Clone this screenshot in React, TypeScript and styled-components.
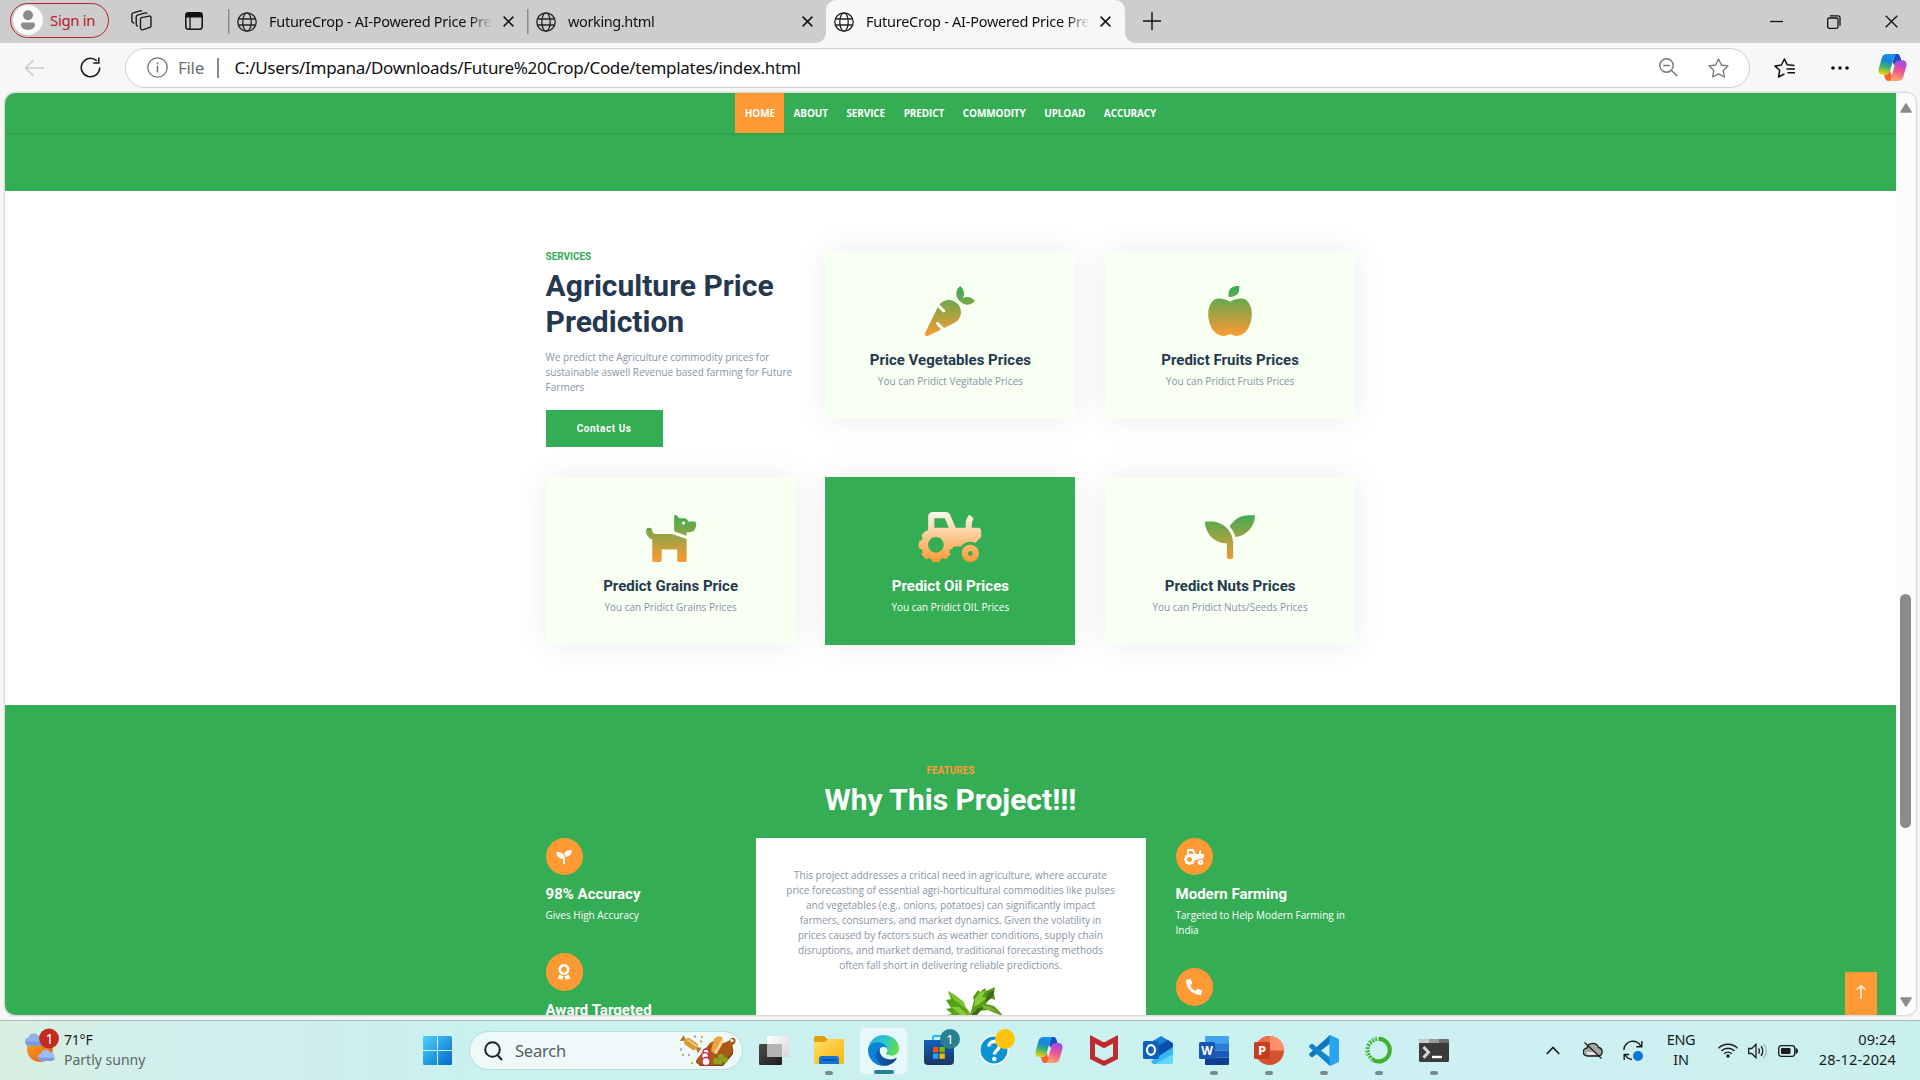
import React from 'react';
import styled, { createGlobalStyle, css } from 'styled-components';
import { FaCarrot, FaAppleAlt, FaDog, FaTractor, FaSeedling, FaAward, FaPhoneAlt } from 'react-icons/fa';
import { BsArrowUp } from 'react-icons/bs';

const GREEN = '#34ad54';
const ORANGE = '#ff9933';
const UI = '"Noto Sans", "Open Sans", sans-serif';
const BODY = '"Open Sans", "Noto Sans", sans-serif';
const HEAD = 'Roboto, "Liberation Sans", sans-serif';

const Global = createGlobalStyle`
  * { box-sizing: border-box; }
  html, body { margin: 0; padding: 0; overflow: hidden; }
  svg { display: block; flex: none; }
  h1, h2, p { margin: 0; }
`;

const Screen = styled.div`
  width: 1920px;
  height: 1080px;
  display: flex;
  flex-direction: column;
  overflow: hidden;
  background: #f7f7f7;
  font-family: ${UI};
`;

/* ---------- tab strip ---------- */

const TabStrip = styled.div`
  height: 43px;
  flex: none;
  display: flex;
  background: #cdcdcd;
`;

const StripTools = styled.div`
  width: 228px;
  padding: 3px 0 5px 10px;
  display: flex;
  align-items: center;
`;

const SignIn = styled.div`
  width: 99px;
  height: 35px;
  border: 1.5px solid #b3262c;
  border-radius: 18px;
  display: flex;
  align-items: center;
  gap: 7px;
  padding: 0 0 1px 2px;
  color: #b3202a;
  font-size: 15px;
  letter-spacing: -0.35px;
  white-space: nowrap;
`;

const StripIcon = styled.div<{ $gap: number }>`
  margin-left: ${(p) => p.$gap}px;
`;

const Tab = styled.div<{ $active?: boolean; $width: number }>`
  position: relative;
  width: ${(p) => p.$width}px;
  height: 43px;
  padding: 0 13px 0 ${(p) => (p.$active ? 8 : 9)}px;
  display: flex;
  align-items: center;
  font-size: 14.5px;
  color: #111;
  ${(p) =>
    p.$active
      ? css`
          background: #f7f7f7;
          border-radius: 10px 10px 0 0;
          &::before, &::after {
            content: '';
            position: absolute;
            bottom: 0;
            width: 10px;
            height: 10px;
          }
          &::before { left: -10px; background: radial-gradient(circle at 0 0, transparent 9.5px, #f7f7f7 10px); }
          &::after { right: -10px; background: radial-gradient(circle at 100% 0, transparent 9.5px, #f7f7f7 10px); }
        `
      : css`
          background: linear-gradient(#8c8c8c, #8c8c8c) 0 9px / 1.5px 25px no-repeat;
        `}
`;

const TabTitle = styled.div<{ $spacing: number }>`
  width: 224px;
  margin-left: 12px;
  margin-right: 10px;
  padding-bottom: 2px;
  white-space: nowrap;
  letter-spacing: ${(p) => p.$spacing}px;
  mask-image: linear-gradient(90deg, #000 200px, transparent 224px);
`;

const NewTab = styled.div`
  margin-left: 18px;
  padding-bottom: 2px;
  display: flex;
  align-items: center;
`;

const WindowButtons = styled.div`
  margin-left: auto;
  padding-right: 22px;
  display: flex;
  align-items: center;
  gap: 44px;
`;

/* ---------- toolbar ---------- */

const Toolbar = styled.div`
  height: 50px;
  flex: none;
  display: flex;
  align-items: center;
  padding: 0 13px 1px 24px;
`;

const AddressBar = styled.div`
  width: 1625px;
  height: 40px;
  margin: 1px 24px 0 24px;
  padding: 0 20px 1px 21px;
  border: 1.5px solid #d0d0d0;
  border-radius: 20px;
  background: #fff;
  display: flex;
  align-items: center;
`;

const FileTag = styled.span`
  margin-left: 10px;
  padding-bottom: 1px;
  width: 39px;
  font-size: 17px;
  letter-spacing: -0.3px;
  color: #6e6e6e;
`;

const AddressDivider = styled.span`
  width: 1.5px;
  height: 20px;
  background: #8a8a8a;
`;

const Url = styled.span`
  margin-left: 16px;
  padding-bottom: 1px;
  flex: 1;
  font-size: 17px;
  letter-spacing: -0.3px;
  color: #111;
  white-space: nowrap;
`;

const AddressIcons = styled.div`
  display: flex;
  gap: 30px;
`;

const ToolIcons = styled.div`
  display: flex;
  align-items: center;
`;

/* ---------- page ---------- */

const Viewport = styled.div`
  width: 1911px;
  height: 922px;
  margin-left: 5px;
  flex: none;
  display: flex;
  border-radius: 10px;
  overflow: hidden;
  box-shadow: 0 0 2px 1px rgba(0, 0, 0, 0.16);
  background: #fcfcfc;
`;

const Page = styled.div`
  position: relative;
  width: 1891px;
  height: 922px;
  overflow: hidden;
  background: #fff;
`;

const ScrollRail = styled.div`
  width: 20px;
  display: flex;
  flex-direction: column;
  align-items: center;
  padding: 10px 1px 8px 0;
  background: #fcfcfc;
`;

const ScrollThumb = styled.div`
  width: 11px;
  height: 234px;
  margin: 481px 0 auto;
  border-radius: 6px;
  background: #8b8b8b;
`;

const Nav = styled.nav`
  position: relative;
  height: 40px;
  display: flex;
  justify-content: center;
  background: ${GREEN};
  box-shadow: 0 1px 3px rgba(0, 0, 0, 0.1);
`;

const NavLink = styled.a<{ $active?: boolean }>`
  padding: 0 9.3px;
  line-height: 41px;
  height: 40px;
  font-family: ${BODY};
  font-size: 10px;
  font-weight: 700;
  letter-spacing: -0.12px;
  color: #fff;
  background: ${(p) => (p.$active ? ORANGE : 'transparent')};
`;

const HeroTail = styled.div`
  height: 58px;
  background: ${GREEN};
`;

const Services = styled.section`
  height: 514px;
  padding: 60px 0 0 540.6px;
  display: grid;
  grid-template-columns: repeat(3, 250px);
  grid-template-rows: 196px 168px;
  column-gap: 29.75px;
  row-gap: 30px;
  align-items: start;
`;

const Intro = styled.div`
  display: flex;
  flex-direction: column;
  align-items: flex-start;
`;

const Kicker = styled.div<{ $orange?: boolean }>`
  height: 12px;
  margin-bottom: 5px;
  line-height: 12px;
  font-family: ${HEAD};
  font-weight: 700;
  font-size: 10px;
  letter-spacing: -0.05px;
  color: ${(p) => (p.$orange ? ORANGE : GREEN)};
`;

const Heading = styled.h1<{ $light?: boolean }>`
  font-family: ${HEAD};
  font-size: 30px;
  line-height: 36px;
  font-weight: 700;
  color: ${(p) => (p.$light ? '#fff' : '#24394f')};
`;

const Copy = styled.p<{ $tone?: 'white' }>`
  font-family: ${BODY};
  font-size: 10px;
  line-height: 15px;
  color: ${(p) => (p.$tone === 'white' ? '#fff' : '#8795a5')};
`;

const IntroCopy = styled(Copy)`
  margin-top: 10px;
  margin-bottom: 15px;
`;

const ContactButton = styled.a`
  width: 117px;
  height: 37px;
  line-height: 38px;
  text-align: center;
  background: ${GREEN};
  color: #fff;
  font-family: ${HEAD};
  font-size: 10px;
  font-weight: 700;
  letter-spacing: 0.55px;
`;

const Card = styled.article<{ $active?: boolean }>`
  height: 168px;
  padding-top: 35px;
  display: flex;
  flex-direction: column;
  align-items: center;
  background: ${(p) => (p.$active ? GREEN : '#f8fff3')};
  box-shadow: 0 0 30px rgba(0, 0, 0, 0.08);
  > svg { height: 50px; width: 64px; }
  > svg path { fill: url(${(p) => (p.$active ? '#glow' : '#field')}); }
`;

const CardTitle = styled.h2<{ $light?: boolean }>`
  margin: 15px 0 5px;
  font-family: ${HEAD};
  font-size: 15px;
  line-height: 18px;
  font-weight: 700;
  letter-spacing: 0.02px;
  color: ${(p) => (p.$light ? '#fff' : '#24394f')};
`;

const Features = styled.section`
  height: 400px;
  padding-top: 60px;
  background: ${GREEN};
  display: flex;
  flex-direction: column;
  align-items: center;
`;

const FeatureColumns = styled.div`
  margin-top: 20px;
  width: 810px;
  display: grid;
  grid-template-columns: 180px 390px 180px;
  column-gap: 30px;
`;

const FeatureList = styled.div`
  display: flex;
  flex-direction: column;
  gap: 30px;
`;

const FeatureTitle = styled(CardTitle)`
  margin-top: 10px;
`;

const Disc = styled.div`
  width: 37.3px;
  height: 37.3px;
  border-radius: 50%;
  display: flex;
  align-items: center;
  justify-content: center;
  background: ${ORANGE};
  color: #fff;
  > svg { width: 20px; height: 16px; }
`;

const Story = styled.div`
  padding: 30px 30px 0;
  height: 300px;
  background: #fff;
  text-align: center;
  display: flex;
  flex-direction: column;
  align-items: center;
  gap: 10px;
`;

const CelerySlot = styled.div`
  margin: 1px 0 0 49px;
`;

const BackToTop = styled.a`
  position: absolute;
  right: 19px;
  bottom: 0;
  width: 32px;
  height: 43px;
  padding-top: 12px;
  display: flex;
  justify-content: center;
  background: ${ORANGE};
  color: #fff;
  font-size: 16px;
  > svg { stroke: #fff; stroke-width: 0.4px; }
`;

/* ---------- taskbar ---------- */

const Taskbar = styled.div`
  height: 60px;
  margin-top: auto;
  flex: none;
  display: flex;
  align-items: center;
  border-top: 1px solid #a9bcbc;
  background: linear-gradient(90deg, #d9efe0 0, #d2efeb 120px, #cfeeee 300px, #c9f1ef 480px, #cbf1f0 1200px, #cdf0f2 1500px, #caf0ee 1920px);
`;

const Weather = styled.div`
  width: 399px;
  padding-left: 25px;
  display: flex;
  align-items: center;
  > svg { margin-bottom: 10px; }
`;

const WeatherText = styled.div`
  margin: 0 0 1px 4px;
  font-size: 14px;
  line-height: 20px;
  letter-spacing: -0.2px;
  color: #1c1c1c;
  span { display: block; color: #5b6666; letter-spacing: 0; }
`;

const StartButton = styled.div`
  width: 70px;
  padding-left: 24px;
`;

const SearchBox = styled.div`
  width: 274px;
  height: 39px;
  border-radius: 20px;
  border: 1px solid #b9dcdc;
  background: #eefafa;
  display: flex;
  align-items: center;
  padding: 0 6px 0 14px;
  font-size: 16.5px;
  color: #555e5e;
  letter-spacing: -0.2px;
  > span { flex: 1; margin-left: 12px; padding-bottom: 1px; }
`;

const Apps = styled.div`
  margin-left: 3px;
  display: flex;
`;

const AppSlot = styled.div<{ $open?: boolean; $active?: boolean }>`
  position: relative;
  width: 55px;
  height: 48px;
  padding-bottom: 1px;
  display: flex;
  align-items: center;
  justify-content: center;
  ${(p) =>
    p.$active &&
    css`
      width: 49px;
      margin: 0 3px;
      border-radius: 6px;
      background: #e6f8f7;
      border: 1px solid #d6eeed;
    `}
  &::after {
    content: '';
    display: ${(p) => (p.$open ? 'block' : 'none')};
    position: absolute;
    bottom: 0;
    left: 50%;
    transform: translateX(-50%);
    width: ${(p) => (p.$active ? 20 : 8)}px;
    height: 4px;
    border-radius: 2px;
    background: ${(p) => (p.$active ? '#258393' : '#778c8c')};
  }
`;

const Badge = styled.div<{ $color: string }>`
  position: absolute;
  left: 29px;
  top: 2px;
  width: 20px;
  height: 20px;
  border-radius: 50%;
  background: ${(p) => p.$color};
  color: #fff;
  font-size: 13px;
  line-height: 20px;
  text-align: center;
`;

const Tray = styled.div`
  margin-left: auto;
  padding-right: 24px;
  display: flex;
  align-items: center;
  color: #1b1b1b;
`;

const TrayText = styled.div<{ $width: number; $align: string; $spacing?: number }>`
  width: ${(p) => p.$width}px;
  padding-bottom: 3px;
  text-align: ${(p) => p.$align};
  font-size: 14.5px;
  line-height: 20px;
  letter-spacing: ${(p) => p.$spacing ?? -0.3}px;
  white-space: nowrap;
`;

const Gap = styled.span<{ $w: number }>`
  width: ${(p) => p.$w}px;
`;

/* ---------- drawings ---------- */

const Globe = () => (
  <svg width="20" height="20" viewBox="0 0 20 20" fill="none" stroke="#222" strokeWidth="1.3">
    <circle cx="10" cy="10" r="9.2" />
    <ellipse cx="10" cy="10" rx="4.2" ry="9.2" />
    <path d="M1.6 7h16.8M1.6 13h16.8" />
  </svg>
);

const Cross = ({ size = 11, w = 1.5 }: { size?: number; w?: number }) => (
  <svg width={size} height={size} viewBox="0 0 11 11" stroke="#111" strokeWidth={w}>
    <path d="M.6 .6l9.8 9.8M10.4 .6L.6 10.4" />
  </svg>
);

const Avatar = () => (
  <svg width="30" height="30" viewBox="0 0 30 30">
    <circle cx="15" cy="15" r="15" fill="#fafafa" />
    <circle cx="15" cy="10.3" r="5" fill="#8b8b8b" />
    <path d="M8 19.2a1.7 1.7 0 0 1 1.700-1.700h10.600a1.700 1.700 0 0 1 1.700 1.700c0 3.800-3 5.600-7 5.600s-7-1.800-7-5.600z" fill="#8b8b8b" />
  </svg>
);

const Workspaces = () => (
  <svg width="21" height="21" viewBox="0 0 21 21" fill="none" stroke="#1c1c1c" strokeWidth="1.4" strokeLinejoin="round">
    <path d="M10.500 7.600l7.600-1.500a1.600 1.600 0 0 1 1.900 1.500v8.300a1.600 1.600 0 0 1-1.200 1.500l-7.300 2.400a1.600 1.600 0 0 1-2-1.500V9.200a1.600 1.600 0 0 1 1-1.600z" />
    <path d="M7 16.500l-1-.7a2 2 0 0 1-.8-1.600V6.900a2 2 0 0 1 1.300-1.800l7.700-2.200a2 2 0 0 1 2 .8" />
    <path d="M3.200 13.400l-1.500-1A2 2 0 0 1 .9 10.800V4.700a2 2 0 0 1 1.300-1.900L9 .9a2 2 0 0 1 1.900.4" />
  </svg>
);

const TabActions = () => (
  <svg width="18" height="18" viewBox="0 0 18 18">
    <rect x=".8" y=".8" width="16.400" height="16.400" rx="2.600" fill="none" stroke="#111" strokeWidth="1.500" />
    <path d="M1 5.500V3a2 2 0 0 1 2-2h12a2 2 0 0 1 2 2v2.500z" fill="#111" />
    <path d="M5 5v12" stroke="#111" strokeWidth="1.300" />
  </svg>
);

const Copilot = ({ size = 28 }: { size?: number }) => (
  <svg width={size} height={size} viewBox="0 0 28 28">
    <path d="M18.500 4.500C18 2.600 17.300 1 15 1h3c2.300 0 3 1.500 3.600 3.500l1.300 4.200h-4z" fill="#1748b5" />
    <path d="M8.500 1H19c-2 0-2.900 1.300-3.500 3.200l-4.100 13.400c-.7 2.200-1.600 3.400-4 3.400H4.600C1.200 21-.2 18.500.7 15L3.500 5.200C4.300 2.400 6 1 8.500 1z" fill="url(#copA)" />
    <path d="M19.500 27H9c2 0 2.900-1.300 3.500-3.200l4.100-13.400c.7-2.200 1.600-3.400 4-3.400h2.800c3.400 0 4.800 2.500 3.900 6l-2.800 9.800c-.8 2.800-2.500 4.200-5 4.200z" fill="url(#copB)" />
    <path d="M7.400 21c2.400 0 3.300-1.200 4-3.400l.3-.8 1.700 5.600C12.500 26 11.500 27 9.800 27 7.500 27 7 25 6.400 23.200L5.800 21z" fill="#f4632f" />
    <path d="M20.600 7c-2.400 0-3.300 1.200-4 3.400l-.5 1.600-2-3 1.500-5C16.300 2 17 1 18.500 1c1.800.2 2.500 1.800 3.100 3.700l.8 2.300z" fill="#1a4cc4" />
  </svg>
);

const Partly = () => (
  <svg width="35" height="36" viewBox="0 0 35 36">
    <circle cx="15" cy="21" r="13" fill="url(#sun)" />
    <path d="M4 17.500a4 4 0 0 1-.5-8 5.300 5.300 0 0 1 10-1 4.600 4.600 0 0 1 4 9z" fill="#8fb1ee" />
    <path d="M4 17.500a4 4 0 0 1-3.500-4h17l0 4z" fill="#7399e2" />
    <path d="M16.500 33a3.800 3.800 0 0 1-.5-7.500 5 5 0 0 1 9.300-1.200A4.500 4.500 0 0 1 26.500 33z" fill="#9dbcf3" />
    <path d="M16.500 33a3.800 3.800 0 0 1-3.400-3.300H30A4.200 4.200 0 0 1 26.500 33z" fill="#7a9fe6" />
    <circle cx="24" cy="10.500" r="10" fill="#c42b1f" />
    <text x="24.500" y="15.500" fontSize="13.500" fill="#fff" textAnchor="middle" fontFamily="Noto Sans">1</text>
  </svg>
);

const Windows = () => (
  <svg width="29" height="29" viewBox="0 0 29 29" fill="url(#win)">
    <path d="M1.500 0H14v14H0V1.500A1.500 1.500 0 0 1 1.500 0zM15 0h12.500A1.500 1.500 0 0 1 29 1.500V14H15zM0 15h14v14H1.500A1.500 1.500 0 0 1 0 27.500zM15 15h14v12.500a1.500 1.500 0 0 1-1.500 1.500H15z" />
  </svg>
);

const Board = () => (
  <svg width="56" height="32" viewBox="0 0 56 32">
    <path d="M30 8l9-5 5 5 6-3c1-3 5-3 5.500 0s-1 4-3 5l1 6-11 14H20c-4-1-5-3-3-6z" fill="#a65a14" />
    <path d="M18 28l3 2h21l11-14v3L43 31H20z" fill="#7a3e0c" />
    <circle cx="52" cy="5.500" r="1.600" fill="#eefafa" />
    <path d="M31 16l3-12c2-3 8-4 9 0l-8 15z" fill="#e9a544" />
    <path d="M34 18l8-14c1.500 0 2 1.500 1.500 3l-7 12z" fill="#f8d792" />
    <g transform="rotate(35 11 9)">
      <rect x="4" y="5" width="14" height="8" rx="3" fill="#d99a3a" />
      <path d="M0 6l4 2v2l-4 3zM22 6l-4 2v2l4 3z" fill="#b97820" />
      <path d="M5 7.500h12" stroke="#f6cf80" strokeWidth="1.500" />
    </g>
    <g fill="#fff" stroke="#d42a55" strokeWidth="1.300">
      <circle cx="26" cy="17" r="3" />
      <circle cx="25" cy="21" r="3.400" />
      <circle cx="26" cy="26.500" r="4" />
    </g>
    <g fill="#8ea31d">
      <circle cx="36" cy="26" r="3" />
      <circle cx="41" cy="22" r="3" />
      <circle cx="45" cy="25" r="2.800" />
      <circle cx="40" cy="27" r="2.600" />
    </g>
    <g fill="#d8ae4c">
      <circle cx="22" cy="2" r="1.200" />
      <circle cx="21" cy="6.500" r="1.200" />
      <circle cx="3" cy="20" r="1.200" />
      <circle cx="12" cy="28" r="1.200" />
    </g>
    <g fill="#b49bd0">
      <circle cx="15" cy="1.500" r="1.200" />
      <circle cx="1" cy="14.500" r="1.200" />
      <circle cx="9" cy="20" r="1.200" />
    </g>
  </svg>
);

const TaskView = () => (
  <svg width="30" height="29" viewBox="0 0 30 29">
    <rect y="8" width="23" height="21" rx="1.200" fill="url(#dark)" />
    <rect x="8" y="0" width="22" height="21" rx="1.200" fill="url(#pane)" />
    <path d="M8 8h15v13H8z" fill="#b4b4b4" />
  </svg>
);

const Explorer = () => (
  <svg width="30" height="28" viewBox="0 0 30 28">
    <path d="M0 2a2 2 0 0 1 2-2h8l3 3h15a2 2 0 0 1 2 2v6H0z" fill="#e09f0b" />
    <path d="M0 6h11l3-3h14.500A1.500 1.500 0 0 1 30 4.500V28H0z" fill="url(#folder)" />
    <path d="M5 28v-5a3 3 0 0 1 3-3h14a3 3 0 0 1 3 3v5z" fill="#1575cf" />
    <path d="M8 24h14" stroke="#0a4c9c" strokeWidth="1.600" />
  </svg>
);

const Edge = () => (
  <svg width="31" height="31" viewBox="0 0 256 256">
    <path d="M231 190.500c-3.400 1.800-7 3.300-10.600 4.700a101.900 101.900 0 0 1-35.900 6.400c-47.300 0-88.500-32.500-88.500-74.300a31.500 31.500 0 0 1 16.400-27.300c-42.800 1.800-53.800 46.400-53.800 72.500 0 73.900 68.100 81.400 82.800 81.400 7.900 0 19.800-2.300 27-4.600l1.300-.4a128.300 128.300 0 0 0 66.600-52.800 4 4 0 0 0-5.300-5.600z" fill="url(#edgeDeep)" />
    <path d="M105.700 241.400A79.200 79.200 0 0 1 83 220.100a80.700 80.700 0 0 1 29.500-120c3.200-1.500 8.500-4.100 15.600-4a32.400 32.400 0 0 1 25.700 13c4.100 5.400 6.200 11.900 6.300 18.700 0-.2 24.500-79.600-80-79.600-43.900 0-80 41.700-80 78.200a130.200 130.200 0 0 0 12.100 56 128 128 0 0 0 156.400 67 75.500 75.500 0 0 1-62.800-8z" fill="#0b84d8" />
    <path d="M152.300 148.900c-.9 1-3.400 2.500-3.400 5.600 0 2.600 1.700 5.200 4.800 7.300 14.300 10 41.400 8.600 41.500 8.600a59.600 59.600 0 0 0 30.300-8.300 61.400 61.400 0 0 0 30.400-52.900c.3-22.400-8-37.300-11.300-43.900C223.500 23.900 177.700 0 128 0A128 128 0 0 0 0 126.200c.5-36.500 36.800-66 80-66 3.500 0 23.500.3 42 10.100 16.300 8.600 24.900 19 30.800 29.200 6.200 10.700 7.300 24.100 7.300 29.500s-2.700 13.300-7.800 19.900z" fill="url(#edgeTop)" />
  </svg>
);

const Store = () => (
  <svg width="30" height="30" viewBox="0 0 30 30">
    <path d="M9 6V2.500A1.500 1.500 0 0 1 10.500 1h9A1.500 1.500 0 0 1 21 2.500V6" fill="none" stroke="#2bb9f2" strokeWidth="2" />
    <path d="M0 5h30v21a4 4 0 0 1-4 4H4a4 4 0 0 1-4-4z" fill="url(#store)" />
    <path d="M9 12h5.300v5.300H9z" fill="#f25022" />
    <path d="M15.500 12h5.300v5.300h-5.300z" fill="#7fba00" />
    <path d="M9 18.500h5.300v5.300H9z" fill="#20a7f0" />
    <path d="M15.500 18.500h5.300v5.300h-5.300z" fill="#ffb900" />
  </svg>
);

const Help = () => (
  <svg width="30" height="30" viewBox="0 0 30 30">
    <circle cx="15" cy="15" r="14.200" fill="#0c93d4" stroke="#fff" strokeWidth="1.500" />
    <path d="M10 11.500c0-3 2-5 5.200-5s5.200 2 5.200 4.600c0 4-5 4.200-5 8.400" fill="none" stroke="#fff" strokeWidth="3.400" />
    <circle cx="15.300" cy="24" r="2.200" fill="#fff" />
  </svg>
);

const McAfee = () => (
  <svg width="28" height="31" viewBox="0 0 28 31">
    <path d="M0 0l14 7.500L28 0v24l-14 7-14-7zM5 8.500v12.800l9 4.500 9-4.500V8.500l-9 4.800z" fill="#c02a2f" fillRule="evenodd" />
  </svg>
);

const Outlook = () => (
  <svg width="31" height="28" viewBox="0 0 31 28">
    <path d="M5 8L18 0l12 7v9H5z" fill="#1583d8" />
    <path d="M5 16L25 4l5 4v5L12 25z" fill="#0a4ea8" />
    <path d="M8 25l22-14v14a3 3 0 0 1-3 3H10z" fill="#35b8f1" />
    <path d="M12 28l18-10v7a3 3 0 0 1-3 3z" fill="#63d6fb" />
    <rect y="5" width="16" height="18" rx="1.500" fill="#0f62bd" />
    <ellipse cx="8" cy="14" rx="4" ry="4.800" fill="none" stroke="#fff" strokeWidth="2.200" />
  </svg>
);

const Word = () => (
  <svg width="30" height="29" viewBox="0 0 30 29">
    <path d="M7 0h22a1 1 0 0 1 1 1v6.500H6V1a1 1 0 0 1 1-1z" fill="#41a5ee" />
    <path d="M6 7.300h24v7.200H6z" fill="#2b7cd3" />
    <path d="M6 14.500h24v7.200H6z" fill="#185abd" />
    <path d="M6 21.700h24V28a1 1 0 0 1-1 1H7a1 1 0 0 1-1-1z" fill="#103f91" />
    <rect y="6" width="16" height="17" rx="1.500" fill="#1a57b5" />
    <text x="8" y="19" fontSize="12" fontWeight="700" fill="#fff" textAnchor="middle" fontFamily="Open Sans">W</text>
  </svg>
);

const PowerPoint = () => (
  <svg width="30" height="29" viewBox="0 0 30 29">
    <circle cx="15.500" cy="14.500" r="14.500" fill="#d35230" />
    <path d="M15.500 0A14.500 14.500 0 0 0 1 14.500h14.500z" fill="#ed6c47" />
    <path d="M15.500 0A14.500 14.500 0 0 1 30 14.500H15.500z" fill="#ff8f6b" />
    <rect y="6" width="16" height="17" rx="1.500" fill="#c43e1c" />
    <text x="8" y="19" fontSize="13" fontWeight="700" fill="#fff" textAnchor="middle" fontFamily="Open Sans">P</text>
  </svg>
);

const Code = () => (
  <svg width="31" height="31" viewBox="0 0 31 31">
    <path d="M22 0L1.500 18.500c-.6.600-.6 1.400 0 2l1.700 1.500c.5.400 1.100.4 1.600 0L22 8.500z" fill="#0f75bd" />
    <path d="M22 31L1.500 12.500c-.6-.6-.6-1.400 0-2L3.200 9c.5-.4 1.100-.4 1.600 0L22 22.500z" fill="#1186cf" />
    <path d="M22 0l7.800 3.500c.7.300 1.200 1 1.200 1.800v20.400c0 .8-.5 1.500-1.200 1.800L22 31c-.5-.3-.5-.7-.5-1.200V1.200c0-.5 0-.9.500-1.200z" fill="#28a3f0" />
  </svg>
);

const Anaconda = () => (
  <svg width="27" height="28" viewBox="0 0 27 28" fill="none" stroke="#3eb12f">
    <path d="M13.500 2.800A11.300 11.300 0 1 1 8 24" strokeWidth="4.200" />
    <path d="M12 2.800A11.300 11.300 0 0 0 9 24.200" strokeWidth="4" strokeDasharray="2.200 1" />
    <path d="M11.500 2A12.500 12.500 0 0 0 8 25" stroke="#cbf1f0" strokeWidth="1" strokeDasharray="2 2" />
  </svg>
);

const Terminal = () => (
  <svg width="30" height="23" viewBox="0 0 30 23">
    <rect width="30" height="23" rx="1.500" fill="#3b3b3b" />
    <path d="M1.500 0H10v4H0V1.500A1.500 1.500 0 0 1 1.500 0z" fill="#c9c9c9" />
    <path d="M10 0h10v4H10z" fill="#9b9b9b" />
    <path d="M20 0h8.500A1.500 1.500 0 0 1 30 1.500V4H20z" fill="#6d6d6d" />
    <path d="M4.500 8l5 5.300-5 5.300" fill="none" stroke="#d5d5d5" strokeWidth="3" />
    <path d="M13 18h10" stroke="#fff" strokeWidth="2.400" />
  </svg>
);

const Celery = () => (
  <svg width="60" height="60" viewBox="0 0 60 60">
    <path d="M20 60L21 30 8 14l12 8 6 8 5-10 5 2-6 12-3 26z" fill="#7fae2c" />
    <path d="M1 16l5-1-3-8 8 5 6 5 5 9 1 6-5 3-12-1-4-3 5-1-6-5 5-1z" fill="#55a318" />
    <path d="M3 7l7 4 5 4 4 3 2 7-6-5-6-4z" fill="#7cc52c" />
    <path d="M27 24l2-8-1-3 5-7 2 2 5-4 1 3 9-4-1 6 1 7-5-2-4 6 8 2 6 6 3 4-8-3-7-3-8 1-5 6-5-2z" fill="#5c9a1c" />
    <path d="M30 15l4-6 7-3-4 7 5 1-8 6-5 3z" fill="#86cb38" />
    <path d="M43 9l6-3-1 7-4 3-4 2z" fill="#43691a" />
    <path d="M6 23l8 0 8 7-4 4-8-1 5-3z" fill="#85c934" />
    <path d="M25 33l8-9 6-1-7 8-2 9h-6z" fill="#3e6b12" />
    <path d="M38 21l7 2 8 5-8-2-7-2z" fill="#79b83a" />
  </svg>
);

const HiddenSvg = styled.svg`
  position: absolute;
`;

const Defs = () => (
  <HiddenSvg width="0" height="0">
    <defs>
      <linearGradient id="field" gradientUnits="userSpaceOnUse" x1="0" y1="0" x2="0" y2="512"><stop stopColor={GREEN} /><stop offset="1" stopColor={ORANGE} /></linearGradient>
      <linearGradient id="glow" gradientUnits="userSpaceOnUse" x1="0" y1="0" x2="0" y2="512"><stop stopColor="#f8f8ee" /><stop offset="1" stopColor={ORANGE} /></linearGradient>
      <linearGradient id="copA" x1=".6" y1="0" x2=".35" y2="1"><stop stopColor="#1b8ff0" /><stop offset=".35" stopColor="#1685d8" /><stop offset=".65" stopColor="#45b36b" /><stop offset="1" stopColor="#ecd20c" /></linearGradient>
      <linearGradient id="copB" x1=".7" y1="0" x2=".4" y2="1"><stop stopColor="#9a4bea" /><stop offset=".45" stopColor="#ea4f9c" /><stop offset="1" stopColor="#ffa860" /></linearGradient>
      <linearGradient id="sun" x1="0" y1="0" x2=".6" y2="1"><stop stopColor="#f3a62a" /><stop offset="1" stopColor="#ef6c12" /></linearGradient>
      <linearGradient id="win" x1="0" y1="0" x2="1" y2="1"><stop stopColor="#4fd1fc" /><stop offset="1" stopColor="#0369c9" /></linearGradient>
      <linearGradient id="dark" x1="0" y1="0" x2="1" y2="1"><stop stopColor="#4d4c48" /><stop offset="1" stopColor="#1d1d1d" /></linearGradient>
      <linearGradient id="pane" x1="0" y1="0" x2="1" y2="1"><stop stopColor="#fff" /><stop offset="1" stopColor="#d6d6d6" /></linearGradient>
      <linearGradient id="folder" x1="0" y1="0" x2="1" y2="1"><stop stopColor="#ffdd6b" /><stop offset="1" stopColor="#f5b70b" /></linearGradient>
      <linearGradient id="edgeDeep" x1="0" y1="0" x2="1" y2="0"><stop stopColor="#1062b8" /><stop offset="1" stopColor="#123f7c" /></linearGradient>
      <linearGradient id="edgeTop" x1="0" y1=".2" x2="1" y2=".5"><stop stopColor="#35a9e6" /><stop offset=".5" stopColor="#2fc4cf" /><stop offset="1" stopColor="#5fdc4e" /></linearGradient>
      <linearGradient id="store" x1="0" y1="0" x2="0" y2="1"><stop stopColor="#0c63b8" /><stop offset="1" stopColor="#1d3463" /></linearGradient>
    </defs>
  </HiddenSvg>
);

/* ---------- data ---------- */

const NAV = ['HOME', 'ABOUT', 'SERVICE', 'PREDICT', 'COMMODITY', 'UPLOAD', 'ACCURACY'];

const CARDS = [
  { icon: <FaCarrot />, title: 'Price Vegetables Prices', text: 'You can Pridict Vegitable Prices' },
  { icon: <FaAppleAlt />, title: 'Predict Fruits Prices', text: 'You can Pridict Fruits Prices' },
  { icon: <FaDog />, title: 'Predict Grains Price', text: 'You can Pridict Grains Prices' },
  { icon: <FaTractor />, title: 'Predict Oil Prices', text: 'You can Pridict OIL Prices', active: true },
  { icon: <FaSeedling />, title: 'Predict Nuts Prices', text: 'You can Pridict Nuts/Seeds Prices' },
];

const APPS: { icon: React.ReactNode; open?: boolean; active?: boolean; badge?: React.ReactNode }[] = [
  { icon: <TaskView /> },
  { icon: <Explorer />, open: true },
  { icon: <Edge />, open: true, active: true },
  { icon: <Store />, badge: <Badge $color="#27808f">1</Badge> },
  { icon: <Help />, badge: <Badge $color="#ffc20e" /> },
  { icon: <Copilot /> },
  { icon: <McAfee /> },
  { icon: <Outlook /> },
  { icon: <Word />, open: true },
  { icon: <PowerPoint />, open: true },
  { icon: <Code />, open: true },
  { icon: <Anaconda />, open: true },
  { icon: <Terminal />, open: true },
];

const Feature = ({ icon, title, text }: { icon: React.ReactNode; title?: string; text?: string }) => (
  <div>
    <Disc>{icon}</Disc>
    {title && <FeatureTitle $light>{title}</FeatureTitle>}
    {text && <Copy $tone="white">{text}</Copy>}
  </div>
);

export default function App() {
  return (
    <Screen>
      <Global />
      <Defs />
      <TabStrip>
        <StripTools>
          <SignIn><Avatar />Sign in</SignIn>
          <StripIcon $gap={22}><Workspaces /></StripIcon>
          <StripIcon $gap={33}><TabActions /></StripIcon>
        </StripTools>
        <Tab $width={299}><Globe /><TabTitle $spacing={-0.28}>FutureCrop - AI-Powered Price Pre</TabTitle><Cross /></Tab>
        <Tab $width={299}><Globe /><TabTitle $spacing={-0.38}>working.html</TabTitle><Cross /></Tab>
        <Tab $width={299} $active><Globe /><TabTitle $spacing={-0.25}>FutureCrop - AI-Powered Price Pre</TabTitle><Cross /></Tab>
        <NewTab>
          <svg width="18" height="18" viewBox="0 0 18 18" stroke="#111" strokeWidth="1.400"><path d="M9 0v18M0 9h18" /></svg>
        </NewTab>
        <WindowButtons>
          <svg width="13" height="13" stroke="#111" strokeWidth="1.300"><path d="M0 6.500h13" /></svg>
          <svg width="14" height="14" fill="none" stroke="#111" strokeWidth="1.300">
            <rect x=".7" y="3" width="10.300" height="10.300" rx="1.500" />
            <path d="M3 .8h8a2 2 0 0 1 2 2v8" />
          </svg>
          <Cross size={13} w={1.1} />
        </WindowButtons>
      </TabStrip>

      <Toolbar>
        <svg width="21" height="18" viewBox="0 0 21 18" fill="none" stroke="#c9c9c9" strokeWidth="1.400"><path d="M20 9H1.500M9.500 1L1.500 9l8 8" /></svg>
        <Gap $w={35} />
        <svg width="21" height="21" viewBox="0 0 21 21" fill="none" stroke="#1a1a1a" strokeWidth="1.600">
          <path d="M19.700 10.500a9.200 9.200 0 1 1-2.900-6.700M18.800 .5V6h-5.500" />
        </svg>
        <AddressBar>
          <svg width="21" height="21" viewBox="0 0 21 21" fill="none" stroke="#707070" strokeWidth="1.300">
            <circle cx="10.500" cy="10.500" r="9.700" />
            <path d="M10.500 9v6.500M10.500 5.500v1.800" strokeWidth="1.500" />
          </svg>
          <FileTag>File</FileTag>
          <AddressDivider />
          <Url>C:/Users/Impana/Downloads/Future%20Crop/Code/templates/index.html</Url>
          <AddressIcons>
            <svg width="19" height="19" viewBox="0 0 19 19" fill="none" stroke="#757575" strokeWidth="1.400">
              <circle cx="7.500" cy="7.500" r="6.700" />
              <path d="M4.200 7.500h6.600M12.300 12.300l6 6" />
            </svg>
            <svg width="21" height="20" viewBox="0 0 21 20" fill="none" stroke="#757575" strokeWidth="1.300" strokeLinejoin="round">
              <path d="M10.500 1l2.900 6 6.600.9-4.800 4.600 1.200 6.500-5.900-3.100L4.600 19l1.200-6.500L1 7.900 7.600 7z" />
            </svg>
          </AddressIcons>
        </AddressBar>
        <ToolIcons>
          <svg width="21" height="20" viewBox="0 0 21 20" fill="none" stroke="#111" strokeWidth="1.500" strokeLinejoin="round">
            <path d="M20.500 7.400l-7.300-.7L10.400 1l-3 6L.9 7.900l4.800 4.600L4.500 19l6-3.100M12.500 11H21M13.500 14.700H21" />
          </svg>
          <Gap $w={36} />
          <svg width="18" height="4" fill="#111"><circle cx="2" cy="2" r="1.800" /><circle cx="9" cy="2" r="1.800" /><circle cx="16" cy="2" r="1.800" /></svg>
          <Gap $w={29} />
          <Copilot size={29} />
        </ToolIcons>
      </Toolbar>

      <Viewport>
        <Page>
          <Nav>{NAV.map((n, i) => <NavLink key={n} $active={i === 0}>{n}</NavLink>)}</Nav>
          <HeroTail />
          <Services>
            <Intro>
              <Kicker>SERVICES</Kicker>
              <Heading>Agriculture Price<br />Prediction</Heading>
              <IntroCopy>We predict the Agriculture commodity prices for<br />sustainable aswell Revenue based farming for Future<br />Farmers</IntroCopy>
              <ContactButton>Contact Us</ContactButton>
            </Intro>
            {CARDS.map((c) => (
              <Card key={c.title} $active={c.active}>
                {c.icon}
                <CardTitle $light={c.active}>{c.title}</CardTitle>
                <Copy $tone={c.active ? 'white' : undefined}>{c.text}</Copy>
              </Card>
            ))}
          </Services>
          <Features>
            <Kicker $orange>FEATURES</Kicker>
            <Heading $light>Why This Project!!!</Heading>
            <FeatureColumns>
              <FeatureList>
                <Feature icon={<FaSeedling />} title="98% Accuracy" text="Gives High Accuracy" />
                <Feature icon={<FaAward />} title="Award Targeted" />
              </FeatureList>
              <Story>
                <Copy>
                  This project addresses a critical need in agriculture, where accurate<br />
                  price forecasting of essential agri-horticultural commodities like pulses<br />
                  and vegetables (e.g., onions, potatoes) can significantly impact<br />
                  farmers, consumers, and market dynamics. Given the volatility in<br />
                  prices caused by factors such as weather conditions, supply chain<br />
                  disruptions, and market demand, traditional forecasting methods<br />
                  often fall short in delivering reliable predictions.
                </Copy>
                <CelerySlot><Celery /></CelerySlot>
              </Story>
              <FeatureList>
                <Feature icon={<FaTractor />} title="Modern Farming" text="Targeted to Help Modern Farming in India" />
                <Feature icon={<FaPhoneAlt />} />
              </FeatureList>
            </FeatureColumns>
          </Features>
          <BackToTop><BsArrowUp /></BackToTop>
        </Page>
        <ScrollRail>
          <svg width="12" height="10"><path d="M6 1L11 9H1z" fill="#8b8b8b" stroke="#8b8b8b" strokeWidth="1.500" strokeLinejoin="round" /></svg>
          <ScrollThumb />
          <svg width="12" height="10"><path d="M6 9L11 1H1z" fill="#8b8b8b" stroke="#8b8b8b" strokeWidth="1.500" strokeLinejoin="round" /></svg>
        </ScrollRail>
      </Viewport>

      <Taskbar>
        <Weather>
          <Partly />
          <WeatherText>71°F<span>Partly sunny</span></WeatherText>
        </Weather>
        <StartButton><Windows /></StartButton>
        <SearchBox>
          <svg width="19" height="20" viewBox="0 0 19 20" fill="none" stroke="#222" strokeWidth="2"><circle cx="8.500" cy="8.500" r="7.300" /><path d="M13.500 14l4.500 5" /></svg>
          <span>Search</span>
          <Board />
        </SearchBox>
        <Apps>
          {APPS.map((a, i) => (
            <AppSlot key={i} $open={a.open} $active={a.active}>{a.icon}{a.badge}</AppSlot>
          ))}
        </Apps>
        <Tray>
          <svg width="14" height="9" fill="none" stroke="#1b1b1b" strokeWidth="1.700"><path d="M.8 8L7 1.500 13.200 8" /></svg>
          <Gap $w={23} />
          <svg width="20" height="17" viewBox="0 0 20 17">
            <path d="M4.500 14a4 4 0 0 1-.5-8 6 6 0 0 1 11.500-.5A4.300 4.300 0 0 1 15.500 14z" fill="#a5a5a5" stroke="#1b1b1b" strokeWidth="1.300" />
            <path d="M3 10h8l4 3H5z" fill="#e5e5e5" />
            <path d="M1.500 .5l17 16" stroke="#1b1b1b" strokeWidth="1.300" />
          </svg>
          <Gap $w={20} />
          <svg width="20" height="21" viewBox="0 0 20 21" fill="none" stroke="#1b1b1b" strokeWidth="1.400">
            <path d="M.8 10A9 9 0 0 1 18 6.500M18.800 1v5.700h-5.500M9 19.500A9 9 0 0 1 2 14.500M1.200 20v-5.500h5" />
            <circle cx="15" cy="16" r="5" fill="#0b78d8" stroke="none" />
          </svg>
          <Gap $w={22} />
          <TrayText $width={32} $align="center">ENG<br />IN</TrayText>
          <Gap $w={21} />
          <svg width="20" height="15" viewBox="0 0 20 15" fill="none" stroke="#1b1b1b" strokeWidth="1.400">
            <path d="M.6 5.200a13.300 13.300 0 0 1 18.800 0M3.500 8a9.200 9.200 0 0 1 13 0M6.200 10.700a5.400 5.400 0 0 1 7.600 0" />
            <circle cx="10" cy="13" r="1.700" fill="#1b1b1b" stroke="none" />
          </svg>
          <Gap $w={10} />
          <svg width="20" height="16" viewBox="0 0 20 16" fill="none" stroke="#1b1b1b" strokeWidth="1.300">
            <path d="M.7 5.500h3L8 1.300v13.400L3.700 10.500h-3zM10.500 5.500a4 4 0 0 1 0 5M13 3.300a7 7 0 0 1 0 9.400" />
            <path d="M15.500 1a10 10 0 0 1 0 14" stroke="#9fb5b5" />
          </svg>
          <Gap $w={10} />
          <svg width="20" height="12" viewBox="0 0 20 12">
            <rect x=".7" y=".7" width="16" height="10.600" rx="2.500" fill="none" stroke="#1b1b1b" strokeWidth="1.300" />
            <rect x="3" y="3" width="9.500" height="6" rx="1" fill="#1b1b1b" />
            <path d="M18 3.500c2 .5 2 4.500 0 5z" fill="#1b1b1b" stroke="#1b1b1b" />
          </svg>
          <Gap $w={18} />
          <TrayText $width={80} $align="right" $spacing={0.15}>09:24<br />28-12-2024</TrayText>
        </Tray>
      </Taskbar>
    </Screen>
  );
}
